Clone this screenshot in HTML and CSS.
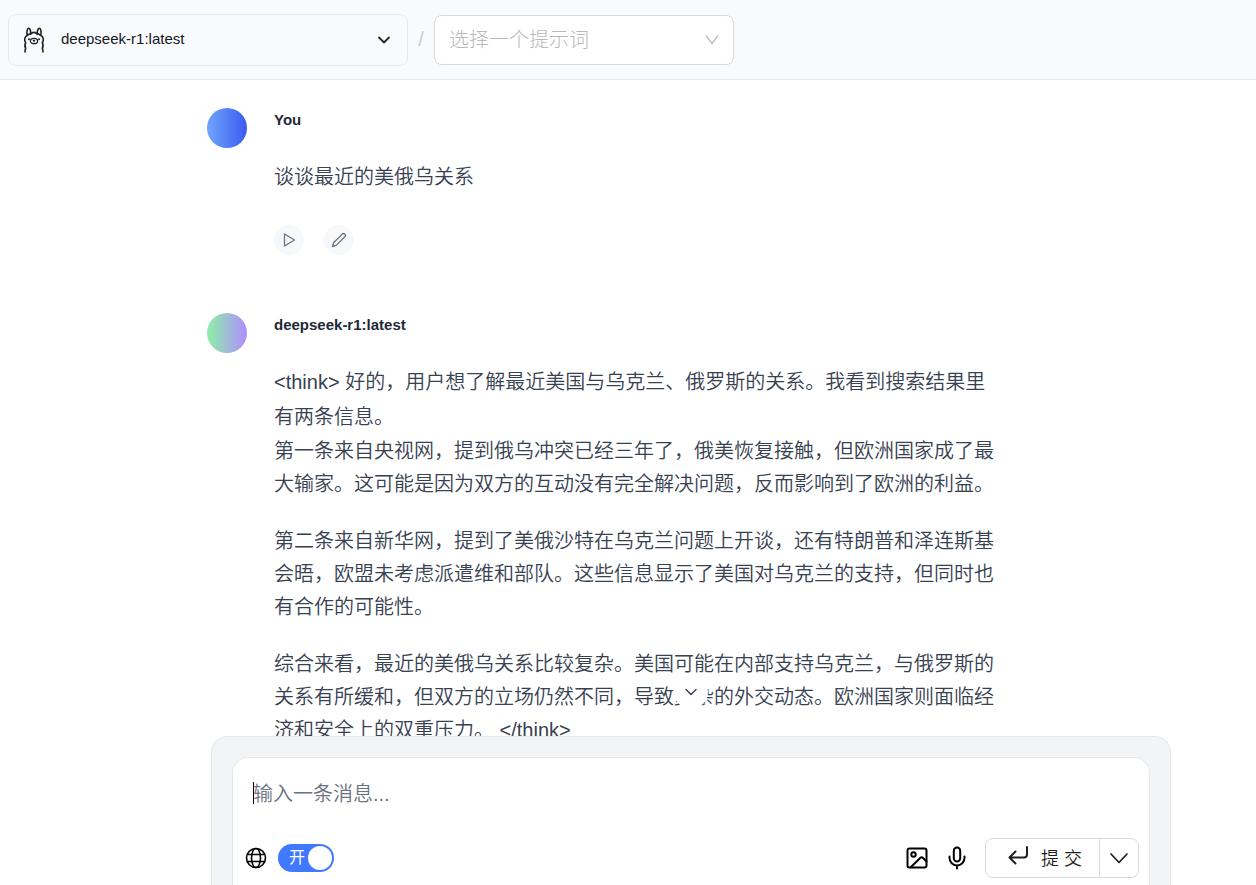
FILE: index.html
```html
<!DOCTYPE html>
<html lang="zh-CN">
<head>
<meta charset="utf-8">
<meta name="viewport" content="width=device-width, initial-scale=1">
<title>deepseek-r1:latest</title>
<link rel="stylesheet" href="styles.css">
</head>
<body>
<div class="app">
  <header class="topbar">
    <div class="picker picker-model">
      <select class="picker-select" aria-label="模型">
        <option>deepseek-r1:latest</option>
      </select>
      <svg class="picker-logo" width="24" height="28" viewBox="0 0 24 28" fill="none" stroke="#1f2328" stroke-width="1.6" stroke-linecap="round" stroke-linejoin="round" aria-hidden="true">
        <path d="M3 26c-.1-1.500.1-2.500.7-3.600C2.700 20.700 2.700 18.500 3.700 16.700 2 14.300 2.200 10.500 5.700 9.200"/>
        <path d="M21 26c.1-1.500-.1-2.500-.7-3.600 1-1.700 1-3.900 0-5.700C22 14.300 21.800 10.500 18.300 9.200"/>
        <path d="M5.200 9.200C4.600 6.500 5 2.600 6.400 2.200 8 2.200 8.900 5 8.600 7.400zM18.800 9.200C19.400 6.500 19 2.600 17.600 2.200 16 2.200 15.100 5 15.400 7.400z"/>
        <path d="M8.500 8.300c1.600-2.600 5.400-2.600 7 0"/>
        <ellipse cx="12" cy="15" rx="3.600" ry="2.700" stroke-width="1.300"/>
        <path d="M11.300 14.300l.7.500.7-.5M12 14.800v1.100" stroke-width="1.100"/>
        <path d="M6.900 13.200h.1M17 13.200h.1" stroke-width="1.900"/>
      </svg>
      <svg class="picker-arrow" width="16" height="16" viewBox="0 0 16 16" fill="none" stroke="#1f2937" stroke-width="1.800" stroke-linecap="round" stroke-linejoin="round" aria-hidden="true"><path d="M3 5.500l5 5 5-5"/></svg>
    </div>
    <span class="slash" aria-hidden="true">/</span>
    <div class="picker picker-prompt">
      <select class="picker-select" aria-label="提示词">
        <option>选择一个提示词</option>
      </select>
      <svg class="picker-arrow" width="16" height="16" viewBox="0 0 16 16" fill="none" stroke="#bfbfbf" stroke-width="1.400" aria-hidden="true"><path d="M2 3.500l6 8 6-8"/></svg>
    </div>
  </header>

  <main class="chat">
    <article class="message">
      <div class="avatar avatar-user"></div>
      <div class="message-body">
        <h2 class="author">You</h2>
        <div class="content"><p class="lead">谈谈最近的美俄乌关系</p></div>
        <div class="actions">
          <button class="action" type="button" aria-label="播放">
            <svg width="16" height="16" viewBox="0 0 16 16" fill="none" stroke="#6b7280" stroke-width="1.300" stroke-linejoin="round" aria-hidden="true"><path d="M3.500 2l10 6-10 6z"/></svg>
          </button>
          <button class="action" type="button" aria-label="编辑">
            <svg width="16" height="16" viewBox="0 0 16 16" fill="none" stroke="#6b7280" stroke-width="1.300" stroke-linecap="round" stroke-linejoin="round" aria-hidden="true"><path d="M11.200 2.200a1.750 1.750 0 0 1 2.600 2.600L5.200 13.400l-3.700 1.200 1.100-3.800z"/></svg>
          </button>
        </div>
      </div>
    </article>

    <article class="message">
      <div class="avatar avatar-bot"></div>
      <div class="message-body">
        <h2 class="author">deepseek-r1:latest</h2>
        <div class="content">
          <div class="lead">&lt;think&gt; 好的，用户想了解最近美国与乌克兰、俄罗斯的关系。我看到搜索结果里有两条信息。</div>
          <p>第一条来自央视网，提到俄乌冲突已经三年了，俄美恢复接触，但欧洲国家成了最大输家。这可能是因为双方的互动没有完全解决问题，反而影响到了欧洲的利益。</p>
          <p>第二条来自新华网，提到了美俄沙特在乌克兰问题上开谈，还有特朗普和泽连斯基会晤，欧盟未考虑派遣维和部队。这些信息显示了美国对乌克兰的支持，但同时也有合作的可能性。</p>
          <p>综合来看，最近的美俄乌关系比较复杂。美国可能在内部支持乌克兰，与俄罗斯的关系有所缓和，但双方的立场仍然不同，导致复杂的外交动态。欧洲国家则面临经济和安全上的双重压力。 &lt;/think&gt;</p>
        </div>
      </div>
    </article>
  </main>

  <footer class="dock">
    <button class="to-bottom" type="button" aria-label="滚动到底部">
      <svg width="16" height="16" viewBox="0 0 16 16" fill="none" stroke="#374151" stroke-width="1.500" stroke-linecap="round" stroke-linejoin="round" aria-hidden="true"><path d="M3 5.500l5 5 5-5"/></svg>
    </button>
    <form class="composer">
      <div class="entry">
        <textarea class="entry-text" rows="1" aria-label="消息" placeholder="输入一条消息..."></textarea>
        <span class="caret" aria-hidden="true"></span>
      </div>
      <div class="tools">
        <svg width="22" height="22" viewBox="0 0 22 22" fill="none" stroke="#000" stroke-width="1.600" aria-hidden="true"><circle cx="11" cy="11" r="9.500"/><ellipse cx="11" cy="11" rx="4.500" ry="9.500"/><path d="M2.500 7.500h17M2.500 14.500h17"/></svg>
        <label class="switch">
          <input class="switch-input" type="checkbox" role="switch" aria-label="联网搜索" checked>
          <span class="switch-text">开</span>
        </label>
        <div class="tools-end">
          <button class="tool" type="button" aria-label="上传图片">
            <svg width="24" height="24" viewBox="0 0 24 24" fill="none" stroke="#000" stroke-width="2" stroke-linecap="round" stroke-linejoin="round" aria-hidden="true"><rect x="2.500" y="2.500" width="19" height="19" rx="2"/><circle cx="8.500" cy="8.500" r="2.200"/><path d="M21.500 15.500l-3.500-3.500a2 2 0 0 0-2.800 0L6 21"/></svg>
          </button>
          <button class="tool" type="button" aria-label="语音输入">
            <svg width="24" height="24" viewBox="0 0 24 24" fill="none" stroke="#000" stroke-width="2" stroke-linecap="round" stroke-linejoin="round" aria-hidden="true"><rect x="8.800" y="1.500" width="6.400" height="14" rx="3.200"/><path d="M19.500 10.500v1.500a7.500 7.500 0 0 1-15 0v-1.500M12 19.500v3"/></svg>
          </button>
          <div class="submit-group">
            <button class="submit" type="submit">
              <svg width="22" height="22" viewBox="0 0 22 22" fill="none" stroke="#1f1f1f" stroke-width="2" stroke-linecap="round" stroke-linejoin="round" aria-hidden="true"><path d="M20 1v7.500a3 3 0 0 1-3 3H2.500M8.500 5.500l-6 6 6 6"/></svg>
              <span>提 交</span>
            </button>
            <button class="submit-more" type="button" aria-label="更多选项">
              <svg width="20" height="20" viewBox="0 0 20 20" fill="none" stroke="#1f1f1f" stroke-width="1.700" stroke-linecap="round" stroke-linejoin="round" aria-hidden="true"><path d="M2 6l8 8.500L18 6"/></svg>
            </button>
          </div>
        </div>
      </div>
    </form>
  </footer>
</div>
</body>
</html>
```

FILE: styles.css
```css
*, *::before, *::after { box-sizing: border-box; }

body {
  margin: 0;
  background: #fff;
  color: #374151;
  font-family: "Liberation Sans", "Noto Sans CJK SC", sans-serif;
  font-size: 20px;
}

button, select, textarea { font: inherit; color: inherit; }
button { padding: 0; cursor: pointer; }
svg { display: block; flex: none; }
h2, p { margin: 0; }

.app {
  display: flex;
  flex-direction: column;
  height: 100vh;
  overflow: hidden;
}

/* Top bar */
.topbar {
  display: flex;
  align-items: center;
  flex: none;
  height: 80px;
  padding: 0 8px;
  background: #f9fafb;
  border-bottom: 1px solid #e5e7eb;
}

.picker {
  display: grid;
  align-items: center;
  min-width: 0;
}

.picker > * { grid-area: 1 / 1; }

.picker-select {
  width: 100%;
  border: 1px solid #e5e7eb;
  border-radius: 8px;
  background: transparent;
  appearance: none;
}

.picker-logo { margin-left: 14px; pointer-events: none; }
.picker-arrow { justify-self: end; pointer-events: none; }
.picker-model { flex: 0 1 400px; }

.picker-model .picker-select {
  height: 52px;
  padding: 0 48px 2px 52px;
  color: #111827;
  font-size: 15px;
}

.picker-model .picker-arrow { margin-right: 16px; }

.slash {
  width: 26px;
  color: #c9ccd1;
  text-align: center;
}

.picker-prompt { flex: 0 1 300px; }

.picker-prompt .picker-select {
  height: 50px;
  padding: 0 40px 0 14px;
  background: #fff;
  border-color: #d9d9d9;
  color: #b8b8b8;
  font-weight: 300;
}

.picker-prompt .picker-arrow { margin-right: 14px; }

/* Conversation */
.chat {
  display: flex;
  flex-direction: column;
  flex: 1;
  gap: 58px;
  min-height: 0;
  padding: 28px 16px 0 207px;
  overflow: hidden;
}

.message {
  display: flex;
  flex: none;
  gap: 27px;
}

.avatar {
  flex: none;
  width: 40px;
  height: 40px;
  border-radius: 50%;
}

.avatar-user { background: linear-gradient(to right, #70a5fd, #3b5bf0); }
.avatar-bot { background: linear-gradient(to right, #8df0a8, #b18cff); }

.message-body { max-width: 724px; }

.author {
  margin-bottom: 28px;
  color: #1f2937;
  font-size: 15px;
  line-height: 24px;
}

.content {
  font-weight: 350;
  line-height: 33px;
}

.content p + p { margin-top: 24px; }
.content .lead { line-height: 35px; }

.actions {
  display: flex;
  gap: 20px;
  margin-top: 30px;
}

.action {
  display: grid;
  place-items: center;
  width: 30px;
  height: 30px;
  border: 0;
  border-radius: 50%;
  background: #f7f8fa;
}

/* Message composer */
.dock {
  position: relative;
  flex: none;
  width: calc(100% - 211px);
  max-width: 960px;
  margin-left: 211px;
  padding: 20px 20px 0;
  background: #f3f4f6;
  border: 1px solid #e5e7eb;
  border-bottom: 0;
  border-radius: 16px 16px 0 0;
}

.to-bottom {
  position: absolute;
  bottom: 100%;
  left: 50%;
  display: grid;
  place-items: center;
  width: 34px;
  height: 34px;
  margin: 0 0 28px -17px;
  border: 0;
  border-radius: 50%;
  background: #fff;
}

.composer {
  padding: 20px 10px 7px 12px;
  background: #fff;
  border: 1px solid #e5e7eb;
  border-bottom: 0;
  border-radius: 16px 16px 0 0;
}

.entry {
  position: relative;
  padding: 0 8px;
}

.entry-text {
  display: block;
  width: 100%;
  height: 32px;
  padding: 0;
  border: 0;
  outline: 0;
  background: transparent;
  font-weight: 350;
  line-height: 32px;
  resize: none;
}

.entry-text::placeholder { color: #6b7280; }

.caret {
  position: absolute;
  top: 4px;
  left: 8px;
  width: 1px;
  height: 22px;
  background: #000;
}

.tools {
  display: flex;
  align-items: center;
  gap: 11px;
  margin-top: 28px;
}

.switch {
  display: grid;
  align-items: center;
  cursor: pointer;
}

.switch > * { grid-area: 1 / 1; }

.switch-input {
  display: flex;
  align-items: center;
  justify-content: flex-end;
  width: 56px;
  height: 28px;
  margin: 0;
  padding: 2px;
  border-radius: 14px;
  background: #4078ff;
  appearance: none;
}

.switch-input::before {
  width: 24px;
  height: 24px;
  border-radius: 50%;
  background: #fff;
  content: "";
}

.switch-input:not(:checked) {
  justify-content: flex-start;
  background: #bfbfbf;
}

.switch-text {
  padding-left: 11px;
  color: #fff;
  font-size: 16px;
  line-height: 28px;
  pointer-events: none;
}

.tools-end {
  display: flex;
  align-items: center;
  gap: 16px;
  margin-left: auto;
}

.tool {
  border: 0;
  background: transparent;
}

.submit-group {
  display: flex;
  height: 40px;
  border: 1px solid #d9d9d9;
  border-radius: 8px;
}

.submit, .submit-more {
  display: flex;
  align-items: center;
  justify-content: center;
  border: 0;
  background: transparent;
  color: #1f1f1f;
}

.submit {
  gap: 12px;
  width: 113px;
  padding: 0 0 2px 4px;
  font-size: 18px;
  font-weight: 350;
}

.submit-more {
  width: 39px;
  border-left: 1px solid #d9d9d9;
}
```
